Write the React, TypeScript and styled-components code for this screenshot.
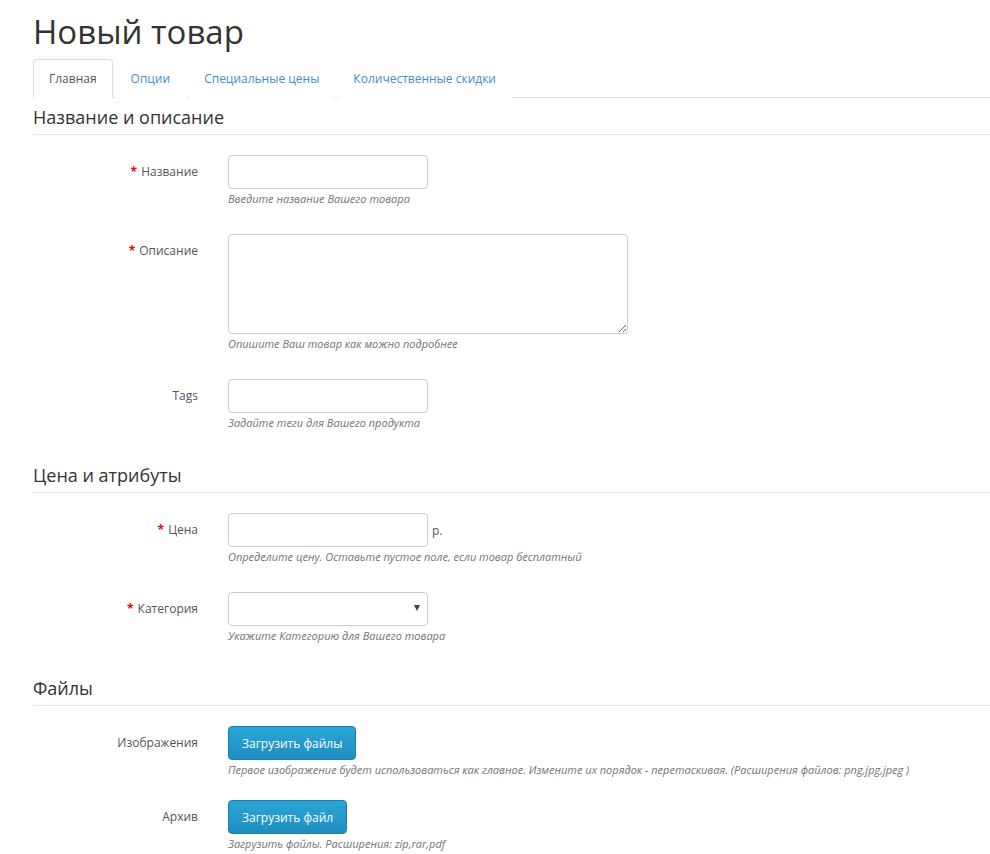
import React from "react"
import styled, { createGlobalStyle } from "styled-components"

const GlobalStyle = createGlobalStyle`
  html, body {
    margin: 0;
    padding: 0;
    background: #fff;
  }
  body {
    font-family: "Open Sans", "Liberation Sans", Arial, sans-serif;
    color: #333;
  }
  * {
    box-sizing: border-box;
  }
`

const Page = styled.div`
  padding: 0 0 0 33px;
  width: 990px;
`

const Title = styled.h1`
  margin: 0;
  padding-top: 9px;
  height: 59px;
  font-size: 33px;
  font-weight: 400;
  line-height: 46px;
  color: #333;
`

const Tabs = styled.ul`
  display: flex;
  margin: 0;
  padding: 0;
  list-style: none;
  border-bottom: 1px solid #ddd;
`

const Tab = styled.li<{ $active?: boolean }>`
  margin-bottom: -1px;
  margin-right: 2px;
  padding: 0 15px;
  height: 39px;
  line-height: 38px;
  font-size: 12px;
  color: ${(p) => (p.$active ? "#555" : "#3f8fc8")};
  background: #fff;
  border: 1px solid ${(p) => (p.$active ? "#ddd" : "transparent")};
  border-bottom-color: ${(p) => (p.$active ? "#fff" : "transparent")};
  border-radius: 4px 4px 0 0;
  cursor: pointer;
`

const Section = styled.section`
  margin-bottom: 0;
`

const SectionTitle = styled.h3<{ $top?: number }>`
  margin: ${(p) => p.$top ?? 0}px 0 0;
  padding: 4px 0 2px;
  height: 37px;
  font-size: 18px;
  font-weight: 400;
  line-height: 30px;
  color: #333;
  border-bottom: 1px solid #e5e5e5;
`

const Fields = styled.div`
  padding-top: 20px;
`

const Row = styled.div<{ $gap?: number }>`
  display: grid;
  grid-template-columns: 165px 1fr;
  column-gap: 30px;
  margin-bottom: ${(p) => p.$gap ?? 27}px;
`

const Label = styled.label`
  text-align: right;
  padding-top: 8px;
  font-size: 12px;
  line-height: 17px;
  color: #555;
`

const Req = styled.span`
  color: #f00;
  font-weight: 700;
  margin-right: 4px;
`

const Control = styled.div`
  display: flex;
  flex-direction: column;
  align-items: flex-start;
`

const InputLine = styled.div`
  display: flex;
  align-items: center;
`

const TextInput = styled.input`
  width: 200px;
  height: 34px;
  border: 1px solid #ccc;
  border-radius: 4px;
  padding: 6px 12px;
  font: inherit;
  font-size: 12px;
`

const TextArea = styled.textarea`
  width: 400px;
  height: 100px;
  border: 1px solid #ccc;
  border-radius: 4px;
  padding: 6px 12px;
  font: inherit;
  font-size: 12px;
  resize: both;
  display: block;
`

const Unit = styled.span`
  margin-left: 4px;
  font-size: 12px;
  color: #555;
`

const SelectBox = styled.div`
  position: relative;
  width: 200px;
  height: 34px;
  border: 1px solid #ccc;
  border-radius: 4px;
  background: #fff;
`

const SelectArrow = styled.span`
  position: absolute;
  right: 7px;
  top: 12px;
  width: 0;
  height: 0;
  border-left: 3px solid transparent;
  border-right: 3px solid transparent;
  border-top: 6px solid #444;
`

const Help = styled.div`
  margin-top: 2px;
  font-size: 11px;
  line-height: 16px;
  font-style: italic;
  color: #737373;
`

const UploadButton = styled.button`
  height: 34px;
  padding: 0 13px;
  border: 1px solid #1b80a8;
  border-radius: 4px;
  background: linear-gradient(to bottom, #2aa6d6 0%, #1f8ec0 100%);
  color: #fff;
  font-family: inherit;
  font-size: 12px;
  font-weight: 500;
  cursor: pointer;
`

export default function App() {
  return (
    <Page>
      <GlobalStyle />
      <Title>Новый товар</Title>
      <Tabs>
        <Tab $active>Главная</Tab>
        <Tab>Опции</Tab>
        <Tab>Специальные цены</Tab>
        <Tab>Количественные скидки</Tab>
      </Tabs>

      <Section>
        <SectionTitle $top={0}>Название и описание</SectionTitle>
        <Fields>
          <Row>
            <Label><Req>*</Req>Название</Label>
            <Control>
              <TextInput />
              <Help>Введите название Вашего товара</Help>
            </Control>
          </Row>
          <Row>
            <Label><Req>*</Req>Описание</Label>
            <Control>
              <TextArea />
              <Help>Опишите Ваш товар как можно подробнее</Help>
            </Control>
          </Row>
          <Row $gap={0}>
            <Label>Tags</Label>
            <Control>
              <TextInput />
              <Help>Задайте теги для Вашего продукта</Help>
            </Control>
          </Row>
        </Fields>
      </Section>

      <Section>
        <SectionTitle $top={25}>Цена и атрибуты</SectionTitle>
        <Fields>
          <Row>
            <Label><Req>*</Req>Цена</Label>
            <Control>
              <InputLine>
                <TextInput />
                <Unit>р.</Unit>
              </InputLine>
              <Help>Определите цену. Оставьте пустое поле, если товар бесплатный</Help>
            </Control>
          </Row>
          <Row $gap={0}>
            <Label><Req>*</Req>Категория</Label>
            <Control>
              <SelectBox>
                <SelectArrow />
              </SelectBox>
              <Help>Укажите Категорию для Вашего товара</Help>
            </Control>
          </Row>
        </Fields>
      </Section>

      <Section>
        <SectionTitle $top={25}>Файлы</SectionTitle>
        <Fields>
          <Row $gap={22}>
            <Label>Изображения</Label>
            <Control>
              <UploadButton>Загрузить файлы</UploadButton>
              <Help>
                Первое изображение будет использоваться как главное. Измените их порядок - перетаскивая. (Расширения файлов: png,jpg,jpeg )
              </Help>
            </Control>
          </Row>
          <Row $gap={0}>
            <Label>Архив</Label>
            <Control>
              <UploadButton>Загрузить файл</UploadButton>
              <Help>Загрузить файлы. Расширения: zip,rar,pdf</Help>
            </Control>
          </Row>
        </Fields>
      </Section>
    </Page>
  )
}
